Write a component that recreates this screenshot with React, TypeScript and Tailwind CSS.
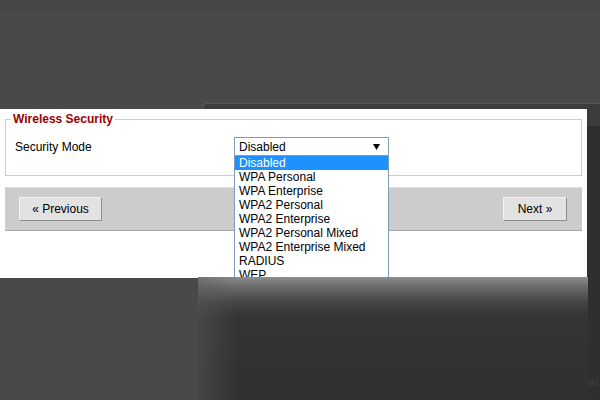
import React from "react";

const items = [
  "Disabled",
  "WPA Personal",
  "WPA Enterprise",
  "WPA2 Personal",
  "WPA2 Enterprise",
  "WPA2 Personal Mixed",
  "WPA2 Enterprise Mixed",
  "RADIUS",
  "WEP",
];

export default function App() {
  return (
    <div
      className="relative w-[600px] h-[400px] overflow-hidden bg-[#494949] text-[12px] text-black"
      style={{ fontFamily: '"Liberation Sans", Arial, sans-serif' }}
    >
      {/* top band */}
      <div className="h-[15px] bg-[#464646] border-b border-[#4f4f4f]" />

      {/* window behind */}
      <div className="absolute left-[203px] top-[103px] right-0 h-[300px] bg-[#3c3c3c] border-t border-l border-[#585858] rounded-tl-[3px]" />
      <div className="absolute left-[587px] top-[126px] right-0 bottom-0 bg-[#2f2f2f]" />

      {/* white panel */}
      <div className="relative mt-[94px] w-[587px] h-[169px] bg-white pt-[3px]">
        <fieldset className="mx-[5px] h-[64px] border border-[#cccccc] pl-[9px] pr-[9px]">
          <legend className="ml-[-4px] px-[2px] leading-[14px] font-bold text-[12px] text-[#990000]">
            Wireless Security
          </legend>
          <div className="mt-[11px] flex items-center h-[19px]">
            <div className="w-[219px]">Security Mode</div>
            <div className="relative w-[155px] h-[19px] border border-[#7f9db9] bg-white flex items-center pl-[4px]">
              <span className="flex-1 leading-[14px]">Disabled</span>
              <svg width="7" height="6" viewBox="0 0 7 6" className="mr-[8px]">
                <path d="M0 0 H7 L3.5 6 Z" fill="#000" />
              </svg>
              <div className="absolute left-[-1px] top-[17px] w-[155px] h-[130px] border border-[#7f9db9] bg-white">
                {items.map((it, i) => (
                  <div
                    key={it}
                    className={
                      i === 0
                        ? "h-[14px] leading-[14px] pl-[4px] bg-[#1e90ff] text-white"
                        : "h-[14px] leading-[14px] pl-[4px]"
                    }
                  >
                    {it}
                  </div>
                ))}
              </div>
            </div>
          </div>
        </fieldset>

        <div className="mx-[5px] mt-[11px] h-[44px] bg-[#cccccc] border-t border-[#dedede] border-b border-b-[#a8a8a8] flex items-center justify-between pl-[14px] pr-[15px]">
          <button className="w-[83px] h-[24px] bg-[#e2e2e2] border border-t-[#f2f2f2] border-l-[#f2f2f2] border-r-[#8e8e8e] border-b-[#8e8e8e] text-[12px]">
            « Previous
          </button>
          <button className="w-[64px] h-[24px] bg-[#e2e2e2] border border-t-[#f2f2f2] border-l-[#f2f2f2] border-r-[#8e8e8e] border-b-[#8e8e8e] text-[12px]">
            Next »
          </button>
        </div>
      </div>

      {/* blurred overlay at bottom */}
      <div
        className="absolute left-[198px] top-[277px] w-[390px] h-[123px]"
        style={{
          background:
            "linear-gradient(to bottom, #8e8e8e 0px, #6a6a6a 10px, #454545 25px, #343434 40px, #303030 100%)",
        }}
      >
        <div
          className="absolute inset-0"
          style={{
            background:
              "linear-gradient(to right, rgba(90,90,90,0.5) 0px, rgba(50,50,50,0) 40px)",
          }}
        />
      </div>
      <div className="absolute left-[588px] top-[374px] text-[13px] leading-[16px] font-bold text-[#3a3a3a]">
        ai
      </div>
    </div>
  );
}
